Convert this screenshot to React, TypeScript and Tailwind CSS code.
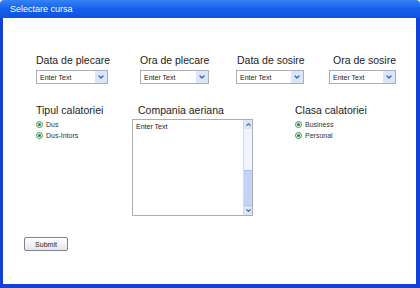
import { ChevronDown, ChevronUp } from "lucide-react";

function Dropdown({ width }: { width: string }) {
  return (
    <div className={`${width} h-[14px] flex items-center border border-[#a9aeb8] bg-white`}>
      <span className="flex-1 pl-[3px] text-[7px] leading-none text-[#222]">Enter Text</span>
      <span className="w-[12px] h-full flex items-center justify-center bg-[#dde6f7]">
        <ChevronDown className="w-[8px] h-[8px] text-[#3b5fc9]" strokeWidth={4} />
      </span>
    </div>
  );
}

function Radio({ label }: { label: string }) {
  return (
    <div className="flex items-center gap-[3px] h-[11px]">
      <span className="w-[7px] h-[7px] rounded-full border border-[#3f9a5a] bg-[#eaf6ec] flex items-center justify-center">
        <span className="w-[3px] h-[3px] rounded-full bg-[#2f7d44]" />
      </span>
      <span className="text-[7px] leading-none text-[#333]">{label}</span>
    </div>
  );
}

export default function App() {
  return (
    <div className="w-[420px] h-[288px] flex flex-col bg-white" style={{ fontFamily: '"Liberation Sans", Arial, sans-serif' }}>
      {/* Title bar */}
      <div className="h-[18px] shrink-0 flex items-center pl-[10px] rounded-t-[4px] bg-gradient-to-b from-[#3682f6] via-[#155fec] to-[#0b52e0]">
        <span className="text-[9px] text-white leading-none">Selectare cursa</span>
      </div>

      {/* Body */}
      <div className="flex-1 flex flex-col border-l-[3px] border-r-[4px] border-b-[4px] border-[#1340d8] pl-[33px] pt-[36px]">
        {/* Row 1 */}
        <div className="flex">
          <div className="w-[104px] flex flex-col gap-[4px]">
            <span className="text-[10.5px] leading-[12px] text-[#222]">Data de plecare</span>
            <Dropdown width="w-[72px]" />
          </div>
          <div className="w-[96px] flex flex-col gap-[4px]">
            <span className="text-[10.5px] leading-[12px] text-[#222]">Ora de plecare</span>
            <Dropdown width="w-[69px]" />
          </div>
          <div className="w-[93px] flex flex-col gap-[4px]">
            <span className="text-[10.5px] leading-[12px] text-[#222] pl-[1px]">Data de sosire</span>
            <Dropdown width="w-[68px]" />
          </div>
          <div className="flex flex-col gap-[4px]">
            <span className="text-[10.5px] leading-[12px] text-[#222] pl-[4px]">Ora de sosire</span>
            <Dropdown width="w-[67px]" />
          </div>
        </div>

        {/* Row 2 */}
        <div className="flex mt-[20px]">
          <div className="w-[96px] flex flex-col">
            <span className="text-[10.5px] leading-[12px] text-[#222] mb-[3px]">Tipul calatoriei</span>
            <Radio label="Dus" />
            <Radio label="Dus-Intors" />
          </div>
          <div className="w-[163px] flex flex-col">
            <span className="text-[10.5px] leading-[12px] text-[#222] pl-[6px] mb-[3px]">Compania aeriana</span>
            <div className="w-[121px] h-[97px] flex border border-[#a9aeb8] bg-white">
              <span className="flex-1 pl-[3px] pt-[3px] text-[7px] leading-none text-[#222]">Enter Text</span>
              <div className="w-[9px] flex flex-col bg-[#f1f4fb] border-l border-[#d5dbe8]">
                <span className="h-[9px] flex items-center justify-center bg-[#dde6f7]">
                  <ChevronUp className="w-[7px] h-[7px] text-[#3b5fc9]" strokeWidth={4} />
                </span>
                <span className="flex-1" />
                <span className="h-[36px] bg-[#c3d3f5] border-y border-[#aabfee]" />
                <span className="h-[9px] flex items-center justify-center bg-[#dde6f7]">
                  <ChevronDown className="w-[7px] h-[7px] text-[#3b5fc9]" strokeWidth={4} />
                </span>
              </div>
            </div>
          </div>
          <div className="flex flex-col">
            <span className="text-[10.5px] leading-[12px] text-[#222] mb-[3px]">Clasa calatoriei</span>
            <Radio label="Business" />
            <Radio label="Personal" />
          </div>
        </div>

        {/* Submit */}
        <div className="mt-[21px] -ml-[12px]">
          <button className="w-[44px] h-[14px] flex items-center justify-center border border-[#7d8594] rounded-[2px] bg-gradient-to-b from-white to-[#e6e6e6] text-[7px] leading-none text-[#222]">
            Submit
          </button>
        </div>
      </div>
    </div>
  );
}
